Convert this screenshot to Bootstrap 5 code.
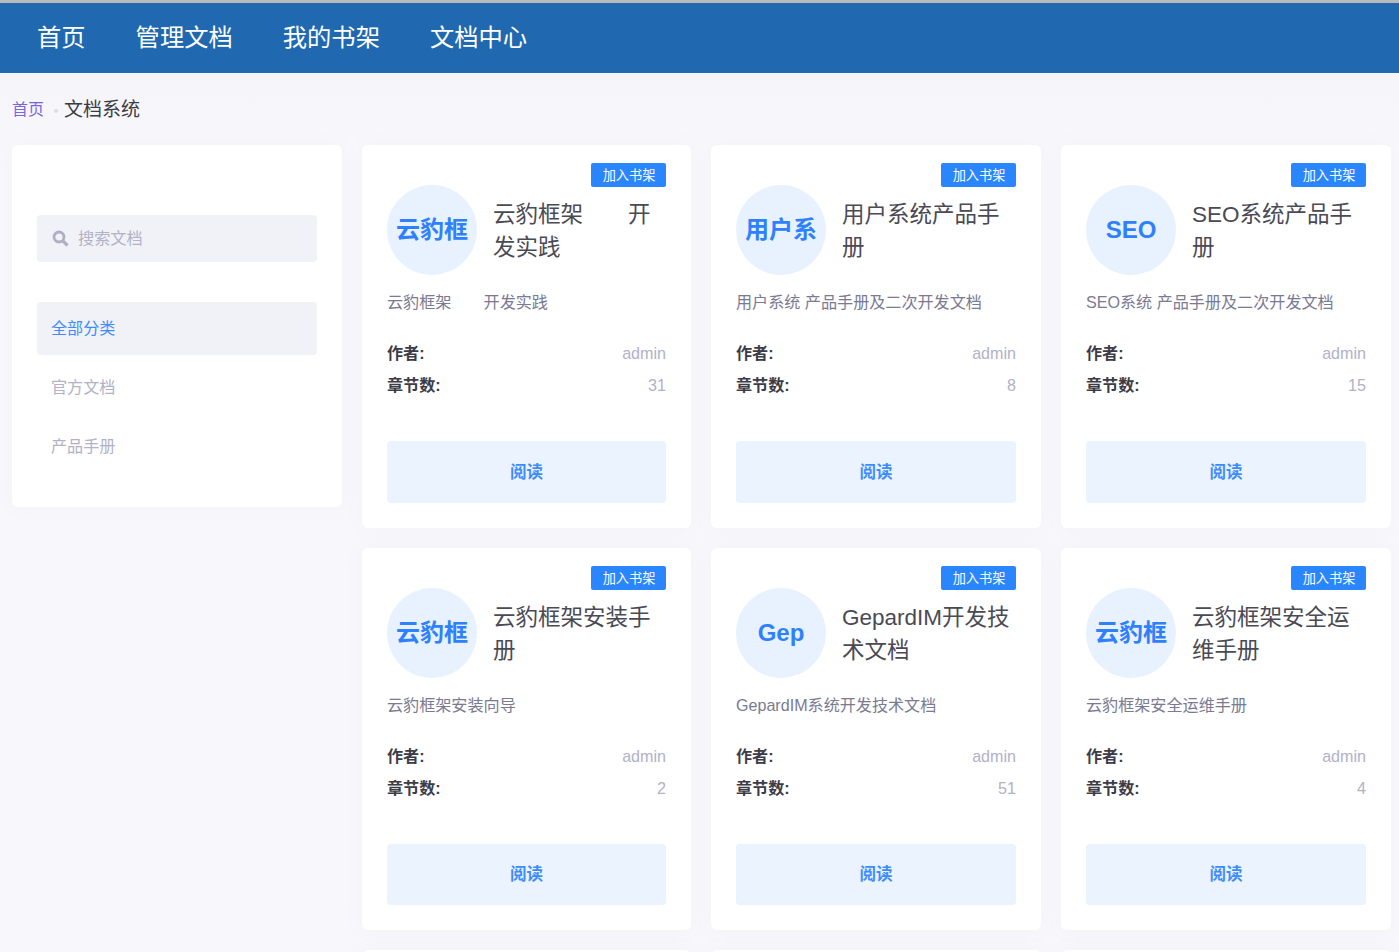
<!DOCTYPE html>
<html lang="zh-CN">
<head>
<meta charset="utf-8">
<title>文档系统</title>
<link href="https://cdn.jsdelivr.net/npm/bootstrap@5.3.0/dist/css/bootstrap.min.css" rel="stylesheet">
<style>
html,body{height:952px;overflow:hidden}
body{background:#f8f8fc;font-family:"Liberation Sans","Noto Sans CJK SC",sans-serif;color:#444;border-top:3px solid #b9b9b9}
.top-bar{background:#2069b0;height:70px;padding:0 12px 0 37px;gap:50px}
.top-bar a{color:#fff;font-size:24.3px;text-decoration:none;line-height:70px}
.page-wrap{padding:0 8px 0 12px;background:linear-gradient(#f5f5f9,#f8f8fc 72px) no-repeat}
.crumbs{height:72px;font-size:14px;padding-top:2px}
.crumbs a{color:#7a66dc;font-size:16px;text-decoration:none}
.crumbs i{width:4px;height:4px;border-radius:50%;background:#dcdce6;margin:2px 6px 0 10px}
.crumbs span{font-size:19px;color:#3b3b45}
.main-grid{display:grid;grid-template-columns:330px 329px 330px 330px;gap:20px;align-items:start}
.panel{background:#fff;border-radius:6px;box-shadow:0 0 20px rgba(90,90,140,.05)}
.side-panel{padding:70px 25px 31px;height:362px}
.search-box{background:#f1f2f7;height:47px;border-radius:4px;padding-left:15px;gap:9px;color:#b1b1c8;font-size:16.2px;margin-bottom:40px}
.cat-item{height:53px;padding-left:14px;font-size:16.1px;color:#b1b1c8;border-radius:4px;margin-bottom:6px;text-decoration:none}
.cat-item.on{background:#f1f2f7;color:#3d8cff}
.doc-card{height:383px;padding:18px 25px 0;position:relative}
.doc-card.short{height:382px}
.shelf-btn{position:absolute;top:18px;right:25px;width:75px;height:24px;background:#2986ff;color:#fff;font-size:13.2px;line-height:24px;padding:1px 0 0 1px;text-align:center;border-radius:2px}
.doc-head{margin-top:22px;height:90px;gap:16px}
.doc-logo{width:90px;height:90px;border-radius:50%;background:#e8f2ff;color:#2e80ff;font-size:24px;font-weight:700;flex:none}
.doc-name{font-size:22.5px;line-height:33px;color:#4a4a55;margin:2px 6px 0 0;font-weight:400}
.doc-desc{font-size:16.1px;line-height:24px;color:#7a7a92;margin:15px 0 0;height:26px}
.doc-meta{margin-top:21px;font-size:16.1px;line-height:32px;height:64px;color:#b1b1c8}
.doc-meta b{color:#3c3c46;font-weight:700}
.read-btn{display:block;margin-top:40px;height:62px;line-height:62px;background:#ebf3ff;color:#3d8cff;font-size:16.5px;font-weight:700;text-align:center;border-radius:4px;text-decoration:none}
.short .read-btn{height:61px;line-height:61px}
</style>
</head>
<body>
<nav class="top-bar d-flex align-items-center">
  <a href="#">首页</a><a href="#">管理文档</a><a href="#">我的书架</a><a href="#">文档中心</a>
</nav>
<div class="page-wrap">
  <div class="crumbs d-flex align-items-center"><a href="#">首页</a><i class="d-block"></i><span>文档系统</span></div>
  <div class="main-grid">
    <aside class="panel side-panel">
      <div class="search-box d-flex align-items-center">
        <svg width="17" height="17" viewBox="0 0 17 17" fill="none" stroke="#aeaec4" aria-hidden="true"><circle cx="7" cy="7" r="5" stroke-width="2.8"/><path d="M10.8 10.8 15.5 15.5" stroke-width="3.2"/></svg>
        <span>搜索文档</span>
      </div>
      <a href="#" class="cat-item on d-flex align-items-center">全部分类</a>
      <a href="#" class="cat-item d-flex align-items-center">官方文档</a>
      <a href="#" class="cat-item d-flex align-items-center">产品手册</a>
    </aside>

    <article class="panel doc-card">
      <span class="shelf-btn">加入书架</span>
      <div class="doc-head d-flex align-items-center"><div class="doc-logo d-flex align-items-center justify-content-center">云豹框</div><h3 class="doc-name">云豹框架　　开发实践</h3></div>
      <p class="doc-desc">云豹框架　　开发实践</p>
      <div class="doc-meta"><div class="d-flex justify-content-between"><b>作者:</b><span>admin</span></div><div class="d-flex justify-content-between"><b>章节数:</b><span>31</span></div></div>
      <a href="#" class="read-btn">阅读</a>
    </article>
    <article class="panel doc-card">
      <span class="shelf-btn">加入书架</span>
      <div class="doc-head d-flex align-items-center"><div class="doc-logo d-flex align-items-center justify-content-center">用户系</div><h3 class="doc-name">用户系统产品手册</h3></div>
      <p class="doc-desc">用户系统 产品手册及二次开发文档</p>
      <div class="doc-meta"><div class="d-flex justify-content-between"><b>作者:</b><span>admin</span></div><div class="d-flex justify-content-between"><b>章节数:</b><span>8</span></div></div>
      <a href="#" class="read-btn">阅读</a>
    </article>
    <article class="panel doc-card">
      <span class="shelf-btn">加入书架</span>
      <div class="doc-head d-flex align-items-center"><div class="doc-logo d-flex align-items-center justify-content-center">SEO</div><h3 class="doc-name">SEO系统产品手册</h3></div>
      <p class="doc-desc">SEO系统 产品手册及二次开发文档</p>
      <div class="doc-meta"><div class="d-flex justify-content-between"><b>作者:</b><span>admin</span></div><div class="d-flex justify-content-between"><b>章节数:</b><span>15</span></div></div>
      <a href="#" class="read-btn">阅读</a>
    </article>

    <div></div>
    <article class="panel doc-card short">
      <span class="shelf-btn">加入书架</span>
      <div class="doc-head d-flex align-items-center"><div class="doc-logo d-flex align-items-center justify-content-center">云豹框</div><h3 class="doc-name">云豹框架安装手册</h3></div>
      <p class="doc-desc">云豹框架安装向导</p>
      <div class="doc-meta"><div class="d-flex justify-content-between"><b>作者:</b><span>admin</span></div><div class="d-flex justify-content-between"><b>章节数:</b><span>2</span></div></div>
      <a href="#" class="read-btn">阅读</a>
    </article>
    <article class="panel doc-card short">
      <span class="shelf-btn">加入书架</span>
      <div class="doc-head d-flex align-items-center"><div class="doc-logo d-flex align-items-center justify-content-center">Gep</div><h3 class="doc-name">GepardIM开发技术文档</h3></div>
      <p class="doc-desc">GepardIM系统开发技术文档</p>
      <div class="doc-meta"><div class="d-flex justify-content-between"><b>作者:</b><span>admin</span></div><div class="d-flex justify-content-between"><b>章节数:</b><span>51</span></div></div>
      <a href="#" class="read-btn">阅读</a>
    </article>
    <article class="panel doc-card short">
      <span class="shelf-btn">加入书架</span>
      <div class="doc-head d-flex align-items-center"><div class="doc-logo d-flex align-items-center justify-content-center">云豹框</div><h3 class="doc-name">云豹框架安全运维手册</h3></div>
      <p class="doc-desc">云豹框架安全运维手册</p>
      <div class="doc-meta"><div class="d-flex justify-content-between"><b>作者:</b><span>admin</span></div><div class="d-flex justify-content-between"><b>章节数:</b><span>4</span></div></div>
      <a href="#" class="read-btn">阅读</a>
    </article>

    <div></div>
    <article class="panel doc-card"></article>
    <article class="panel doc-card"></article>
    <article class="panel doc-card"></article>
  </div>
</div>
<script src="https://cdn.jsdelivr.net/npm/bootstrap@5.3.0/dist/js/bootstrap.bundle.min.js"></script>
</body>
</html>
